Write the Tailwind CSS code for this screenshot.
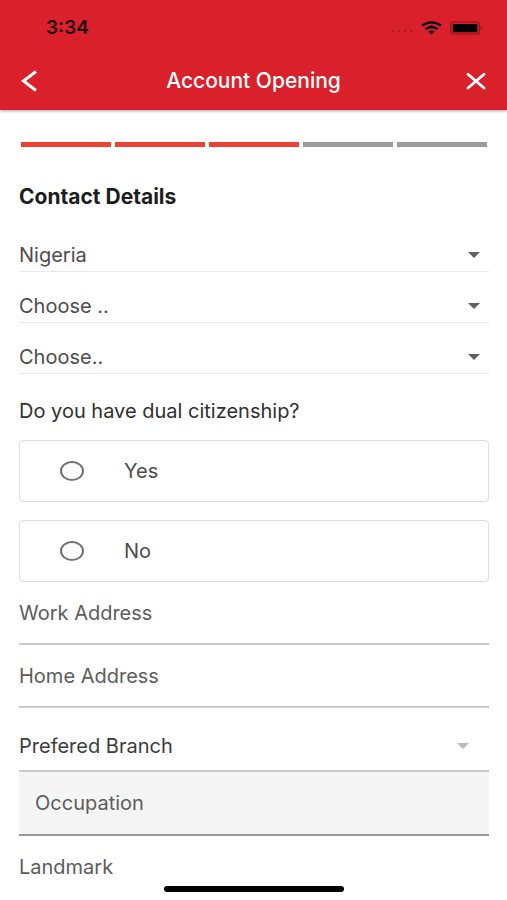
<!DOCTYPE html>
<html lang="en">
<head>
<meta charset="utf-8">
<meta name="viewport" content="width=device-width, initial-scale=1">
<title>Account Opening</title>
<script src="https://cdn.jsdelivr.net/npm/@tailwindcss/browser@4"></script>
</head>
<body class="min-h-screen bg-white font-['Inter','Liberation_Sans',sans-serif] text-[20px] leading-6 text-[#4c4c4c]">
<header class="bg-[#da202a] shadow-[0_1px_3px_rgba(0,0,0,0.35)]">
  <div class="flex h-14 items-center justify-between pr-6 pl-[46px]">
    <span class="text-[19px] font-semibold text-[#1c0405]">3:34</span>
    <div class="flex items-center gap-2">
      <svg class="h-3 w-[22px]" viewBox="0 0 22 12" fill="#a81920" aria-hidden="true"><circle cx="1.5" cy="9" r="1.2"/><circle cx="7.8" cy="9" r="1.2"/><circle cx="14" cy="9" r="1.2"/><circle cx="20.3" cy="9" r="1.2"/></svg>
      <svg class="h-[14px] w-[21px]" viewBox="0 0 20 14" fill="none" stroke="#0c0203" stroke-width="2.5" aria-label="Wi-Fi"><path d="M.6 4.6Q10-2 19.400 4.600"/><path d="M4 8.300Q10 3.500 16 8.300"/><path d="M10 13.400L6.700 10.600Q10 8.300 13.300 10.600Z" fill="#0c0203" stroke="none"/></svg>
      <svg class="h-[14px] w-[33px]" viewBox="0 0 33 14" aria-label="Battery"><rect x=".8" y="1" width="28.500" height="12" rx="3" fill="none" stroke="#8a141b" stroke-width="1.200"/><rect x="2.800" y="3" width="24.500" height="8.200" rx="1" fill="#000"/><path d="M30.600 5.200Q32.600 7 30.600 8.900Z" fill="#6a1015"/></svg>
    </div>
  </div>
  <div class="flex h-[54px] items-center justify-between px-5 pb-1">
    <button type="button" aria-label="Back" class="flex size-6 items-center justify-start"><svg class="h-[22px] w-[18px]" viewBox="0 0 18 22" fill="none" stroke="#fff" stroke-width="3"><path d="M16 1.500L3.500 11L16 20.500"/></svg></button>
    <h1 class="text-[21px] font-medium text-white">Account Opening</h1>
    <button type="button" aria-label="Close" class="flex size-6 items-center justify-end"><svg class="h-[18px] w-[22px]" viewBox="0 0 22 18" fill="none" stroke="#fff" stroke-width="2.800" stroke-linecap="round"><path d="M3 2.200L19 16M19 2.200L3 16"/></svg></button>
  </div>
</header>
<main class="pt-8 pr-[18px] pl-[19px]">
  <div class="flex h-[5px] gap-1 px-[2px]" role="progressbar" aria-label="Step 3 of 5" aria-valuemin="0" aria-valuemax="5" aria-valuenow="3">
    <span class="flex-1 bg-[#ec4235]"></span><span class="flex-1 bg-[#ec4235]"></span><span class="flex-1 bg-[#ec4235]"></span><span class="flex-1 bg-[#9b9b9b]"></span><span class="flex-1 bg-[#9b9b9b]"></span>
  </div>
  <h2 class="mt-[38px] mb-3 text-[21px] font-bold text-[#1d1d1d]">Contact Details</h2>
  <form>
    <div class="relative border-b border-[#e8e8e8]">
      <select aria-label="Country" class="block h-[50px] w-full appearance-none pt-[17px]"><option>Nigeria</option></select>
      <svg class="pointer-events-none absolute right-[9px] bottom-[13px] h-[6px] w-3" viewBox="0 0 12 6" fill="#606060"><path d="M0 0H12L6 6Z"/></svg>
    </div>
    <div class="relative border-b border-[#e8e8e8]">
      <select aria-label="State" class="block h-[50px] w-full appearance-none pt-[17px]"><option>Choose ..</option></select>
      <svg class="pointer-events-none absolute right-[9px] bottom-[13px] h-[6px] w-3" viewBox="0 0 12 6" fill="#606060"><path d="M0 0H12L6 6Z"/></svg>
    </div>
    <div class="relative border-b border-[#e8e8e8]">
      <select aria-label="Local government area" class="block h-[50px] w-full appearance-none pt-[17px]"><option>Choose..</option></select>
      <svg class="pointer-events-none absolute right-[9px] bottom-[13px] h-[6px] w-3" viewBox="0 0 12 6" fill="#606060"><path d="M0 0H12L6 6Z"/></svg>
    </div>
    <fieldset>
      <legend class="pt-[25px] pb-[17px] text-[#303030]">Do you have dual citizenship?</legend>
      <div class="flex flex-col gap-[18px]">
        <label class="flex h-[62px] items-center gap-10 rounded border border-[#dedede] pl-10"><input type="radio" name="dual" class="h-5 w-6 appearance-none rounded-[50%] border-2 border-[#707070] checked:bg-[#777]">Yes</label>
        <label class="flex h-[62px] items-center gap-10 rounded border border-[#dedede] pl-10"><input type="radio" name="dual" class="h-5 w-6 appearance-none rounded-[50%] border-2 border-[#707070] checked:bg-[#777]">No</label>
      </div>
    </fieldset>
    <input type="text" aria-label="Work Address" placeholder="Work Address" class="block h-[63px] w-full border-b-2 border-[#c9c9c9] placeholder:text-[#5c5c5c]">
    <input type="text" aria-label="Home Address" placeholder="Home Address" class="block h-[63px] w-full border-b-2 border-[#c9c9c9] placeholder:text-[#5c5c5c]">
    <div class="relative border-b-2 border-[#c9c9c9]">
      <select aria-label="Prefered Branch" class="block h-[62px] w-full appearance-none pt-[13px] text-[#3c3c3c]"><option>Prefered Branch</option></select>
      <svg class="pointer-events-none absolute right-5 bottom-[21px] h-[6px] w-3" viewBox="0 0 12 6" fill="#bababa"><path d="M0 0H12L6 6Z"/></svg>
    </div>
    <input type="text" aria-label="Occupation" placeholder="Occupation" class="block h-16 w-full border-b-2 border-[#979797] bg-[#f5f5f5] px-4 placeholder:text-[#5c5c5c]">
    <input type="text" aria-label="Landmark" placeholder="Landmark" class="block h-[62px] w-full placeholder:text-[#5c5c5c]">
  </form>
</main>
<div class="fixed bottom-2 left-1/2 h-[6px] w-[180px] -translate-x-1/2 rounded-full bg-black"></div>
</body>
</html>
